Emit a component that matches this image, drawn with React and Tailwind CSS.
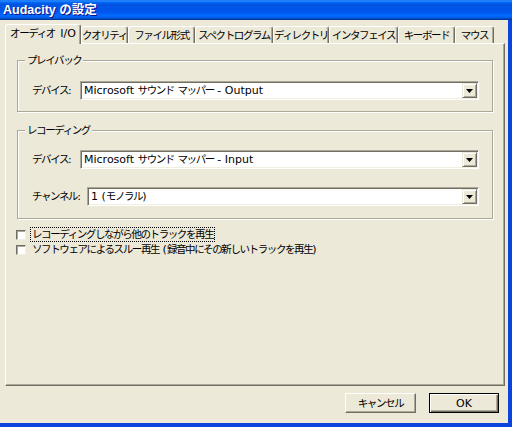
import React from "react";

const CJK = /([\u3000-\u30ff\u3400-\u9fff\uff00-\uffef]+)/;
function T({ s }) {
  return s.split(CJK).map((p, i) =>
    i % 2 === 1 ? (
      <span key={i} className="text-[10.5px] tracking-[-1.4px]">
        {p}
      </span>
    ) : (
      <React.Fragment key={i}>{p}</React.Fragment>
    )
  );
}

const tabs = [
  ["オーディオ\u2002I/O", "w-[76px]", true],
  ["クオリティ", "w-[47px]"],
  ["ファイル形式", "w-[67px]"],
  ["スペクトログラム", "w-[78px]"],
  ["ディレクトリ", "w-[56px]"],
  ["インタフェイス", "w-[69px]"],
  ["キーボード", "w-[57px]"],
  ["マウス", "w-[39px]"],
];

function Tab({ label, w, active }) {
  if (active) {
    return (
      <div
        className={`${w} h-[20px] -mb-px relative z-10 bg-[#ece9d8] border-t border-l border-r border-t-white border-l-white border-r-[#716f64] rounded-t-[3px] shadow-[inset_-1px_0_0_#aca899] flex items-center justify-center pb-[2px] whitespace-nowrap`}
      >
        <T s={label} />
      </div>
    );
  }
  return (
    <div
      className={`${w} h-[17px] border-t border-l border-r border-t-white border-l-white border-r-[#716f64] rounded-t-[3px] shadow-[inset_-1px_0_0_#aca899] flex items-center justify-center whitespace-nowrap`}
    >
      <T s={label} />
    </div>
  );
}

function Combo({ value }) {
  return (
    <div className="flex-1 h-[19px] flex bg-white border border-t-[#aca899] border-l-[#aca899] border-r-white border-b-white shadow-[inset_1px_1px_0_#716f64,inset_-1px_-1px_0_#f1efe2] p-px">
      <div className="flex-1 pl-[2px] leading-[15px] whitespace-nowrap overflow-hidden">
        <T s={value} />
      </div>
      <div className="w-[15px] h-full bg-[#ece9d8] border border-t-[#ece9d8] border-l-[#ece9d8] border-r-[#716f64] border-b-[#716f64] shadow-[inset_1px_1px_0_#fff,inset_-1px_-1px_0_#aca899] flex items-center justify-center">
        <svg width="7" height="4" viewBox="0 0 7 4">
          <polygon points="0,0 7,0 3.5,4" fill="#000" />
        </svg>
      </div>
    </div>
  );
}

function Group({ title, className, children }) {
  return (
    <fieldset
      className={`ml-px border border-[#aca899] shadow-[1px_1px_0_#fff,inset_1px_1px_0_#fff] ${className}`}
    >
      <legend className="ml-[7px] px-[2px] bg-[#ece9d8] leading-[13px]">
        <T s={title} />
      </legend>
      {children}
    </fieldset>
  );
}

function Check({ label, focus }) {
  return (
    <div className="flex items-center h-[15px]">
      <div className="w-[10px] h-[10px] bg-white border border-t-[#716f64] border-l-[#716f64] border-r-[#f1efe2] border-b-[#f1efe2] shadow-[inset_1px_1px_0_#aca899]" />
      <span
        className={`ml-[4px] px-px leading-[12px] border border-dotted whitespace-nowrap ${
          focus ? "border-black" : "border-transparent"
        }`}
      >
        <T s={label} />
      </span>
    </div>
  );
}

export default function App() {
  return (
    <div className="w-[512px] h-[427px] flex flex-col bg-[#ece9d8] text-black text-[11px] leading-[13px] font-['DejaVu_Sans','Noto_Sans_CJK_JP',sans-serif] overflow-hidden">
      <div className="h-[20px] shrink-0 flex items-center pl-[3px] bg-[linear-gradient(180deg,#0058ee_0%,#3593ff_4%,#288eff_6%,#127dff_8%,#036ffc_10%,#0262ee_14%,#0057e5_20%,#0054e3_24%,#0055eb_56%,#005bf5_66%,#026afe_76%,#0062ef_86%,#0052d6_92%,#0040ab_94%,#003092_100%)]">
        <span className="text-white font-bold text-[12.5px] font-['Liberation_Sans','Noto_Sans_CJK_JP',sans-serif] [text-shadow:1px_1px_0_#0f1089]">
          Audacity の設定
        </span>
      </div>
      <div className="flex-1 flex flex-col border-r-4 border-b-4 border-[#0a44dc] pl-[5px]">
        <div className="h-[23px] shrink-0 flex items-end relative z-10">
          {tabs.map(([l, w, a]) => (
            <Tab key={l} label={l} w={w} active={a} />
          ))}
        </div>
        <div className="w-[500px] h-[343px] border-l border-t border-r border-b border-l-white border-t-white border-r-[#716f64] border-b-[#716f64] shadow-[inset_-1px_-1px_0_#aca899] px-[10px] pt-[10px]">
          <Group title="プレイバック" className="mr-px pb-[11px]">
            <div className="flex items-center pl-[14px] pr-[13px] pt-[14px]">
              <div className="w-[48px] whitespace-nowrap">
                <T s="デバイス:" />
              </div>
              <Combo value="Microsoft サウンド マッパー - Output" />
            </div>
          </Group>
          <Group title="レコーディング" className="mr-px mt-[12px] pb-[12px]">
            <div className="flex flex-col gap-[18px] pl-[14px] pr-[13px] pt-[13px]">
              <div className="flex items-center">
                <div className="w-[48px] whitespace-nowrap">
                  <T s="デバイス:" />
                </div>
                <Combo value="Microsoft サウンド マッパー - Input" />
              </div>
              <div className="flex items-center">
                <div className="w-[55px] whitespace-nowrap">
                  <T s="チャンネル:" />
                </div>
                <Combo value="1 (モノラル)" />
              </div>
            </div>
          </Group>
          <div className="mt-[8px] flex flex-col">
            <Check label="レコーディングしながら他のトラックを再生" focus />
            <Check label="ソフトウェアによるスルー再生 (録音中にその新しいトラックを再生)" />
          </div>
        </div>
        <div className="flex justify-end gap-[13px] pr-[9px] pt-[7px]">
          <div className="w-[71px] h-[20px] border border-t-white border-l-white border-r-[#716f64] border-b-[#716f64] shadow-[inset_-1px_-1px_0_#aca899] flex items-center justify-center">
            <T s="キャンセル" />
          </div>
          <div className="w-[70px] h-[20px] border border-black shadow-[inset_1px_1px_0_#fff,inset_-1px_-1px_0_#716f64,inset_-2px_-2px_0_#aca899] flex items-center justify-center">
            OK
          </div>
        </div>
      </div>
    </div>
  );
}
